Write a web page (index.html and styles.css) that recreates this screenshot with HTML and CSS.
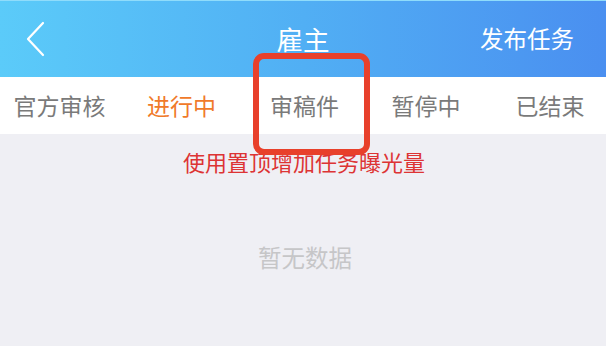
FILE: index.html
```html
<!DOCTYPE html>
<html lang="zh">
<head>
<meta charset="utf-8">
<link rel="stylesheet" href="styles.css">
</head>
<body>
<div class="page">
  <header class="nav">
    <div class="nav-left">
      <svg class="back" width="20" height="36" viewBox="0 0 20 36"><polyline points="17,2 2,18 17,34" fill="none" stroke="#fff" stroke-width="2.2" stroke-linecap="round" stroke-linejoin="round"/></svg>
    </div>
    <div class="nav-title">雇主</div>
    <div class="nav-right">发布任务</div>
  </header>
  <nav class="tabs">
    <div class="tab">官方审核</div>
    <div class="tab active">进行中</div>
    <div class="tab">审稿件</div>
    <div class="tab">暂停中</div>
    <div class="tab">已结束</div>
  </nav>
  <main class="content">
    <div class="notice">使用置顶增加任务曝光量</div>
    <div class="empty">暂无数据</div>
  </main>
  <div class="highlight"></div>
</div>
</body>
</html>
```

FILE: styles.css
```css
* { box-sizing: border-box; margin: 0; padding: 0; }
html, body { width: 606px; height: 346px; overflow: hidden; }
body {
  font-family: "Noto Sans CJK SC", "Noto Sans", sans-serif;
  background: #efeff4;
}
.page {
  position: relative;
  width: 606px;
  height: 346px;
  display: flex;
  flex-direction: column;
  overflow: hidden;
}
.nav {
  height: 77px;
  background: linear-gradient(90deg, #5bcbf9 0%, #51aff4 50%, #4a8ff0 100%);
  border-top: 1px solid #8fdcfb;
  display: grid;
  grid-template-columns: 1fr auto 1fr;
  align-items: center;
  color: #fff;
}
.nav-left { padding-left: 26px; display: flex; align-items: center; }
.back { display: block; }
.nav-title { font-size: 26.5px; line-height: 30px; }
.nav-right {
  justify-self: end;
  padding-right: 32px;
  font-size: 23.5px;
  line-height: 28px;
  margin-top: -2px;
}
.tabs {
  height: 57px;
  background: #fff;
  display: grid;
  grid-template-columns: 119px 125px 121px 122px 126px;
  align-items: center;
  justify-items: center;
  overflow: hidden;
}
.tab {
  font-size: 23px;
  line-height: 28px;
  color: #7a7a7a;
  margin-top: -2px;
  white-space: nowrap;
}
.tab.active { color: #f07a2a; }
.content {
  flex: 1;
  display: flex;
  flex-direction: column;
  align-items: center;
  background: #efeff4;
}
.notice {
  margin-top: 13px;
  font-size: 22px;
  line-height: 28px;
  color: #dd3434;
  padding-left: 2px;
}
.empty {
  margin-top: 68px;
  font-size: 23.5px;
  line-height: 28px;
  color: #c6c6c8;
  padding-left: 4px;
}
.highlight {
  position: absolute;
  left: 253px;
  top: 53px;
  width: 117px;
  height: 102px;
  border: 6px solid #e8402b;
  border-radius: 11px;
}
```
